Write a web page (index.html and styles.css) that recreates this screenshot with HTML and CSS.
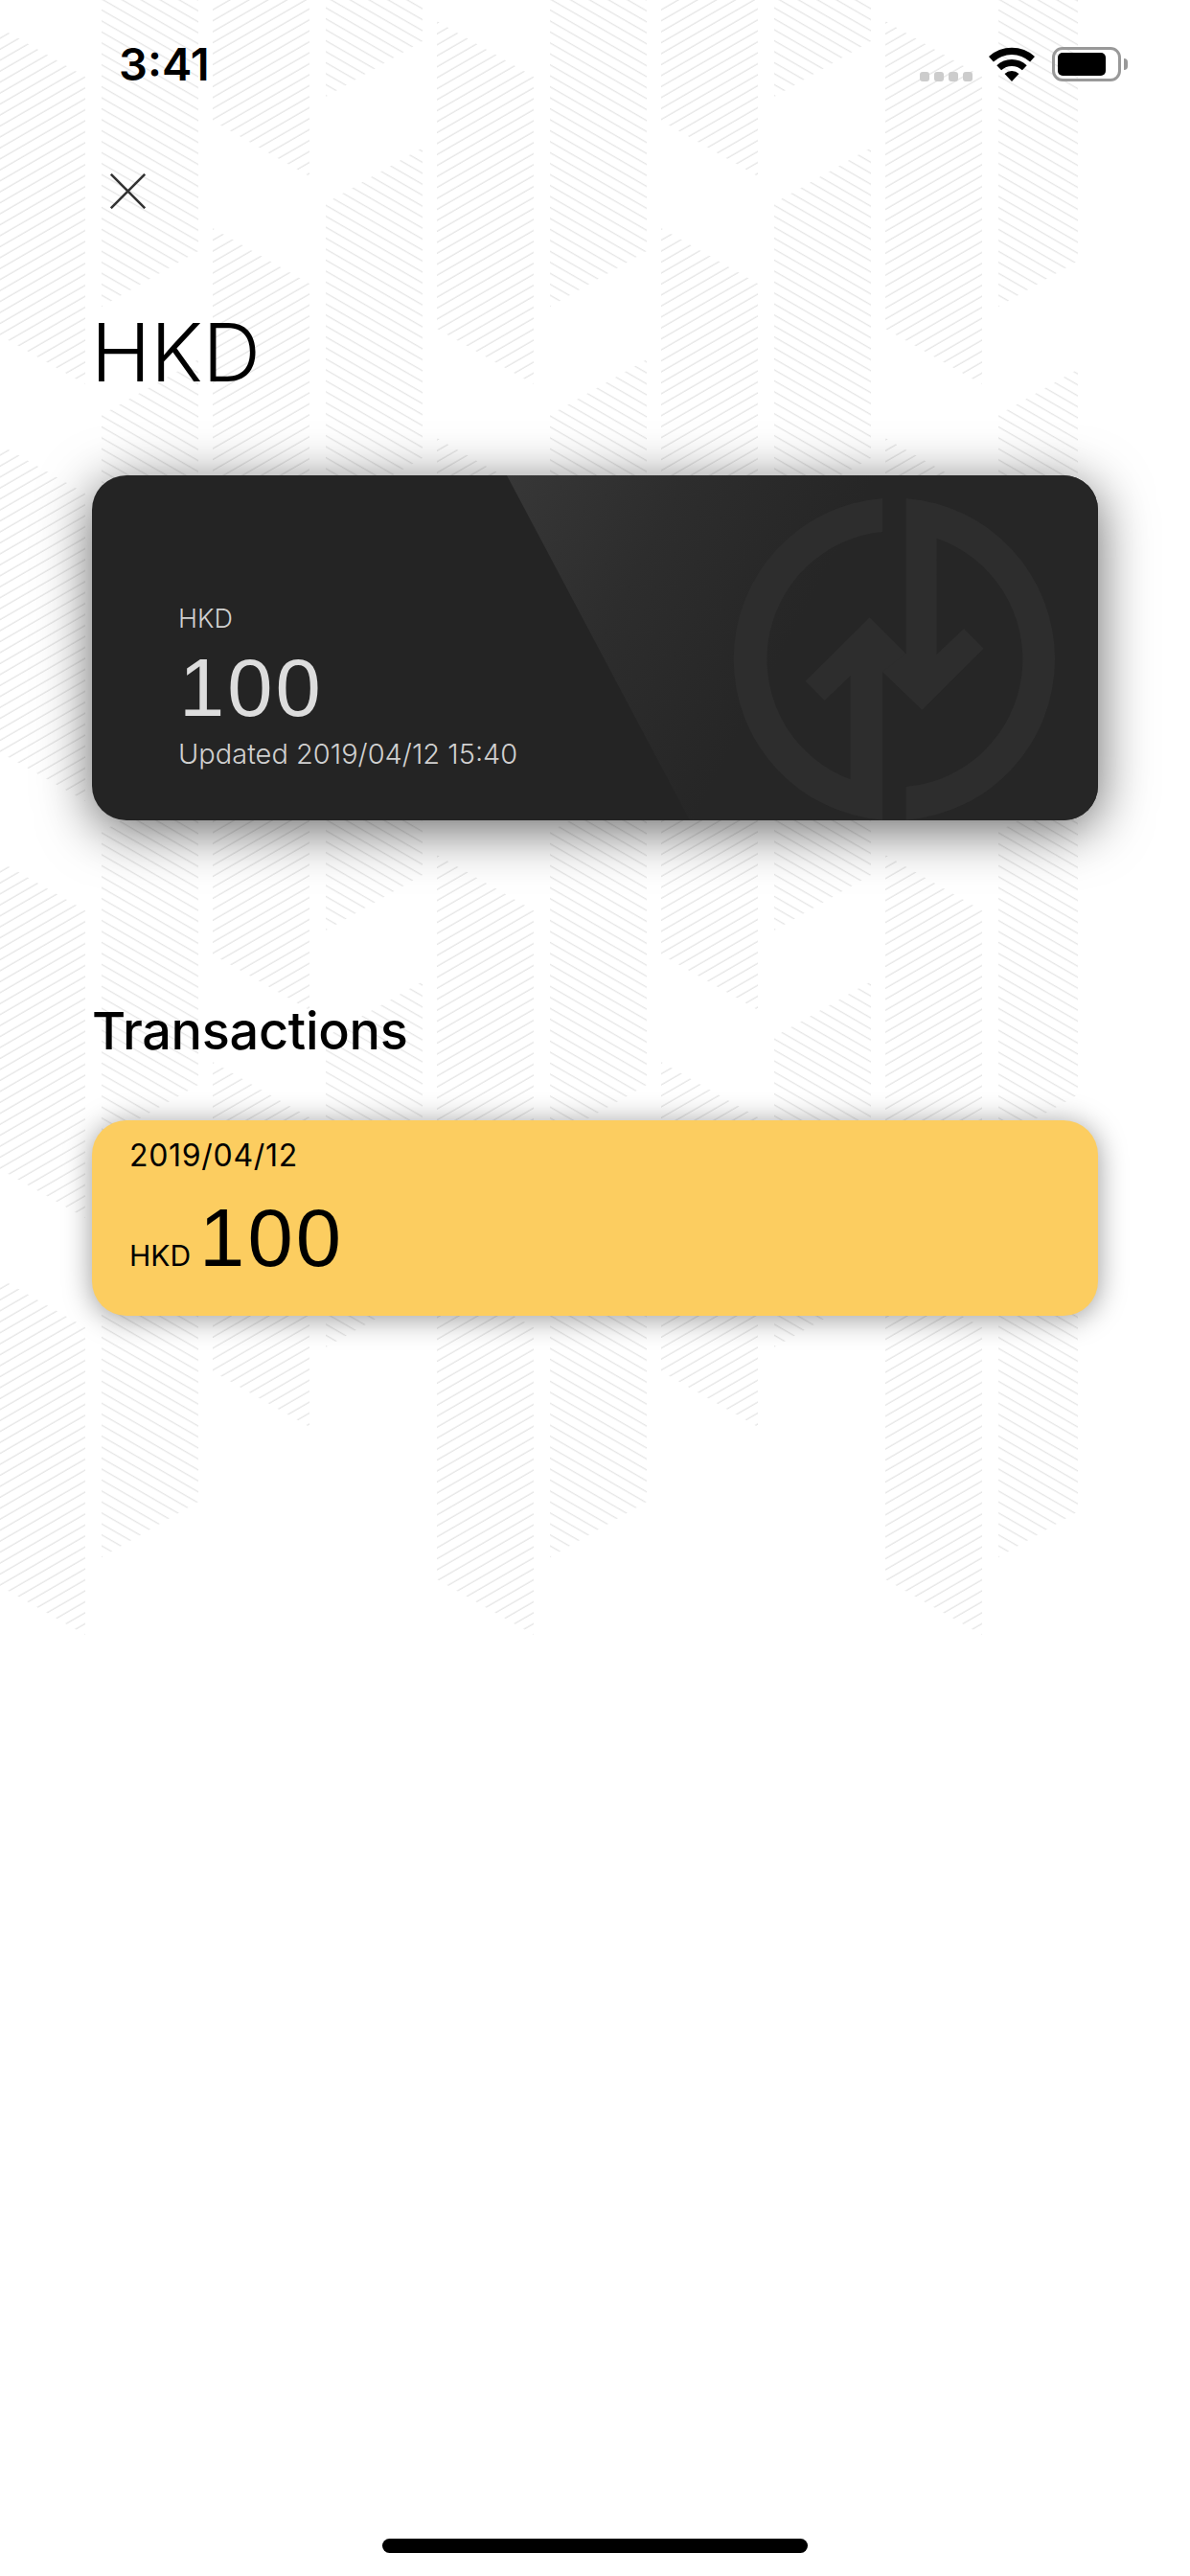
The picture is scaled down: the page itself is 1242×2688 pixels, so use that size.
FILE: index.html
```html
<!DOCTYPE html>
<html lang="en">
<head>
    <meta charset="UTF-8">
    <meta name="viewport" content="width=device-width, initial-scale=1.0">
    <title>HKD</title>
    <link rel="stylesheet" href="styles.css">
</head>
<body>
<div class="screen">

    <!-- Background hatching -->
    <svg class="hatch" width="1242" height="1720" viewBox="0 0 1242 1720" aria-hidden="true">
        <defs>
            <pattern id="hatchUp" patternUnits="userSpaceOnUse" width="120" height="11.447" patternTransform="skewY(-30)">
                <rect x="0" y="0.4" width="120" height="1.5" fill="#e6e6e6"/>
            </pattern>
            <pattern id="hatchDown" patternUnits="userSpaceOnUse" width="120" height="11.447" patternTransform="skewY(30)">
                <rect x="0" y="5.6" width="120" height="1.5" fill="#e6e6e6"/>
            </pattern>
            <clipPath id="hatchClip"><rect x="0" y="0" width="1125" height="1720"/></clipPath>
            <g id="tile">
                <polygon points="106,-2 207,-60 207,262 106,320" fill="url(#hatchDown)"/>
                <polygon points="222,-197 323,-139 323,184 222,126" fill="url(#hatchUp)"/>
                <polygon points="340,-223 441,-281 441,43 340,101" fill="url(#hatchDown)"/>
                <polygon points="456,22 557,80 557,401 456,343" fill="url(#hatchUp)"/>
            </g>
            <g id="row">
                <use href="#tile" x="-468"/>
                <use href="#tile" x="0"/>
                <use href="#tile" x="468"/>
                <use href="#tile" x="936"/>
            </g>
        </defs>
        <g clip-path="url(#hatchClip)">
            <use href="#row" y="0"/>
            <use href="#row" y="435"/>
            <use href="#row" y="870"/>
            <use href="#row" y="1305"/>
        </g>
    </svg>

    <header class="status-bar">
        <span class="time">3:41</span>
        <div class="status-icons">
            <div class="signal"><i></i><i></i><i></i><i></i></div>
            <svg class="wifi" width="48" height="36" viewBox="0 0 48 36">
                <path d="M0 10A35.5 35.5 0 0 1 48 10L43.1 15.5A28 28 0 0 0 4.9 15.5Z"/>
                <path d="M8.3 19.2A23 23 0 0 1 39.7 19.2L34.9 24.3A16 16 0 0 0 13.1 24.3Z"/>
                <path d="M16.5 28A11 11 0 0 1 31.5 28L24 36Z"/>
            </svg>
            <div class="battery"><div class="battery-level"></div></div>
        </div>
    </header>

    <button class="close-btn" aria-label="Close">
        <svg width="37" height="37" viewBox="0 0 37 37">
            <path d="M0.8 0.8L36.2 36.2M36.2 0.8L0.8 36.2" stroke="#333" stroke-width="2.6" fill="none"/>
        </svg>
    </button>

    <h1 class="page-title">HKD</h1>

    <section class="balance-card">
        <svg class="balance-logo" width="347" height="340" viewBox="60 78 1041 1020">
            <path d="M543 90A505 505 0 0 0 543 1097L543 633L615 700L615 575L503 463L302 662L362 723L443 645L443 970A401 401 0 0 1 543 195Z"/>
            <path d="M617 90A505 505 0 0 1 617 1097L617 993A401 401 0 0 0 713 215L713 578L798 498L860 560L667 752L543 633L617 575Z"/>
        </svg>
        <div class="balance-info">
            <p class="balance-currency">HKD</p>
            <p class="balance-amount">100</p>
            <p class="balance-updated">Updated 2019/04/12 15:40</p>
        </div>
    </section>

    <h2 class="section-title">Transactions</h2>

    <section class="txn-card">
        <p class="txn-date">2019/04/12</p>
        <p class="txn-amount"><span class="txn-currency">HKD</span><span class="txn-value">100</span></p>
    </section>

    <div class="home-indicator"></div>
</div>
</body>
</html>
```

FILE: styles.css
```css
* {
    padding: 0;
    margin: 0;
    box-sizing: border-box;
}

body {
    font-family: Inter, "Noto Sans", Arial, sans-serif;
    background-color: #fff;
    color: #000;
}

.screen {
    position: relative;
    width: 1242px;
    height: 2688px;
    overflow: hidden;
    display: flex;
    flex-direction: column;
    background-color: #fff;
}

/* Hatching behind everything */
.hatch {
    position: absolute;
    top: 0;
    left: 0;
}

/* Status bar */
.status-bar {
    position: relative;
    height: 96px;
    padding: 49px 72px 0 124px;
    display: flex;
    justify-content: space-between;
    align-items: flex-start;
}

.time {
    font-size: 47px;
    font-weight: 600;
    line-height: 36px;
}

.status-icons {
    display: flex;
    align-items: flex-start;
}

.signal {
    display: flex;
    gap: 5px;
    margin-top: 26px;
    margin-right: 17px;
}

.signal i {
    display: block;
    width: 10px;
    height: 10px;
    border-radius: 3px;
    background-color: #ccc;
}

.wifi {
    display: block;
    margin-right: 18px;
}

.battery {
    position: relative;
    width: 72px;
    height: 36px;
    padding: 3px;
    border: 3px solid #999;
    border-radius: 11px;
}

.battery::after {
    content: "";
    position: absolute;
    top: 9px;
    right: -10px;
    width: 4px;
    height: 12px;
    border-radius: 0 4px 4px 0;
    background-color: #999;
}

.battery-level {
    width: 50px;
    height: 24px;
    border-radius: 5px;
    background-color: #000;
}

/* Close button */
.close-btn {
    position: relative;
    align-self: flex-start;
    width: 37px;
    height: 37px;
    margin: 85px 0 0 115px;
    border: none;
    background: none;
}

.close-btn svg {
    display: block;
}

.page-title {
    position: relative;
    margin: 100px 0 0 95px;
    font-size: 84px;
    font-weight: 300;
    line-height: 100px;
}

/* Dark balance card */
.balance-card {
    position: relative;
    width: 1050px;
    height: 360px;
    margin: 78px 0 0 96px;
    border-radius: 36px;
    background-color: #242424;
    box-shadow: 0 10px 55px rgba(0, 0, 0, 0.6);
    overflow: hidden;
}

.balance-card::before {
    content: "";
    position: absolute;
    inset: 0;
    background: linear-gradient(118deg, #373737 35%, #2d2d2d 50%, #262626 66%);
    clip-path: polygon(433px 0, 100% 0, 100% 100%, 624px 100%);
}

.balance-logo {
    position: absolute;
    top: 20px;
    left: 664px;
    fill: #2d2d2d;
}

.balance-info {
    position: relative;
    padding: 134px 0 0 90px;
    color: #d0d0d0;
}

.balance-currency {
    font-size: 27px;
    font-weight: 300;
    line-height: 32px;
}

.balance-amount {
    margin: 14px 0 0 1px;
    font-family: "Liberation Sans", Arial, sans-serif;
    font-size: 85px;
    line-height: 84px;
    letter-spacing: 3px;
    color: #ddd;
}

.balance-updated {
    margin-top: 11px;
    font-size: 29px;
    font-weight: 300;
    line-height: 32px;
}

.section-title {
    position: relative;
    margin: 187px 0 0 96px;
    font-size: 54px;
    font-weight: 500;
    line-height: 66px;
    letter-spacing: -0.3px;
}

/* Yellow transaction card */
.txn-card {
    position: relative;
    width: 1050px;
    height: 204px;
    margin: 60px 0 0 96px;
    padding: 17px 39px 0;
    border-radius: 36px;
    background-color: #fccd60;
    box-shadow: 0 3px 30px rgba(0, 0, 0, 0.4);
}

.txn-date {
    font-size: 32px;
    line-height: 40px;
    letter-spacing: 0.7px;
}

.txn-amount {
    display: flex;
    align-items: baseline;
    gap: 9px;
    margin-top: 24px;
}

.txn-currency {
    font-size: 30px;
}

.txn-value {
    font-family: "Liberation Sans", Arial, sans-serif;
    font-size: 85px;
    line-height: 84px;
    letter-spacing: 3px;
}

.home-indicator {
    position: absolute;
    left: 399px;
    bottom: 24px;
    width: 444px;
    height: 15px;
    border-radius: 8px;
    background-color: #000;
}
```
